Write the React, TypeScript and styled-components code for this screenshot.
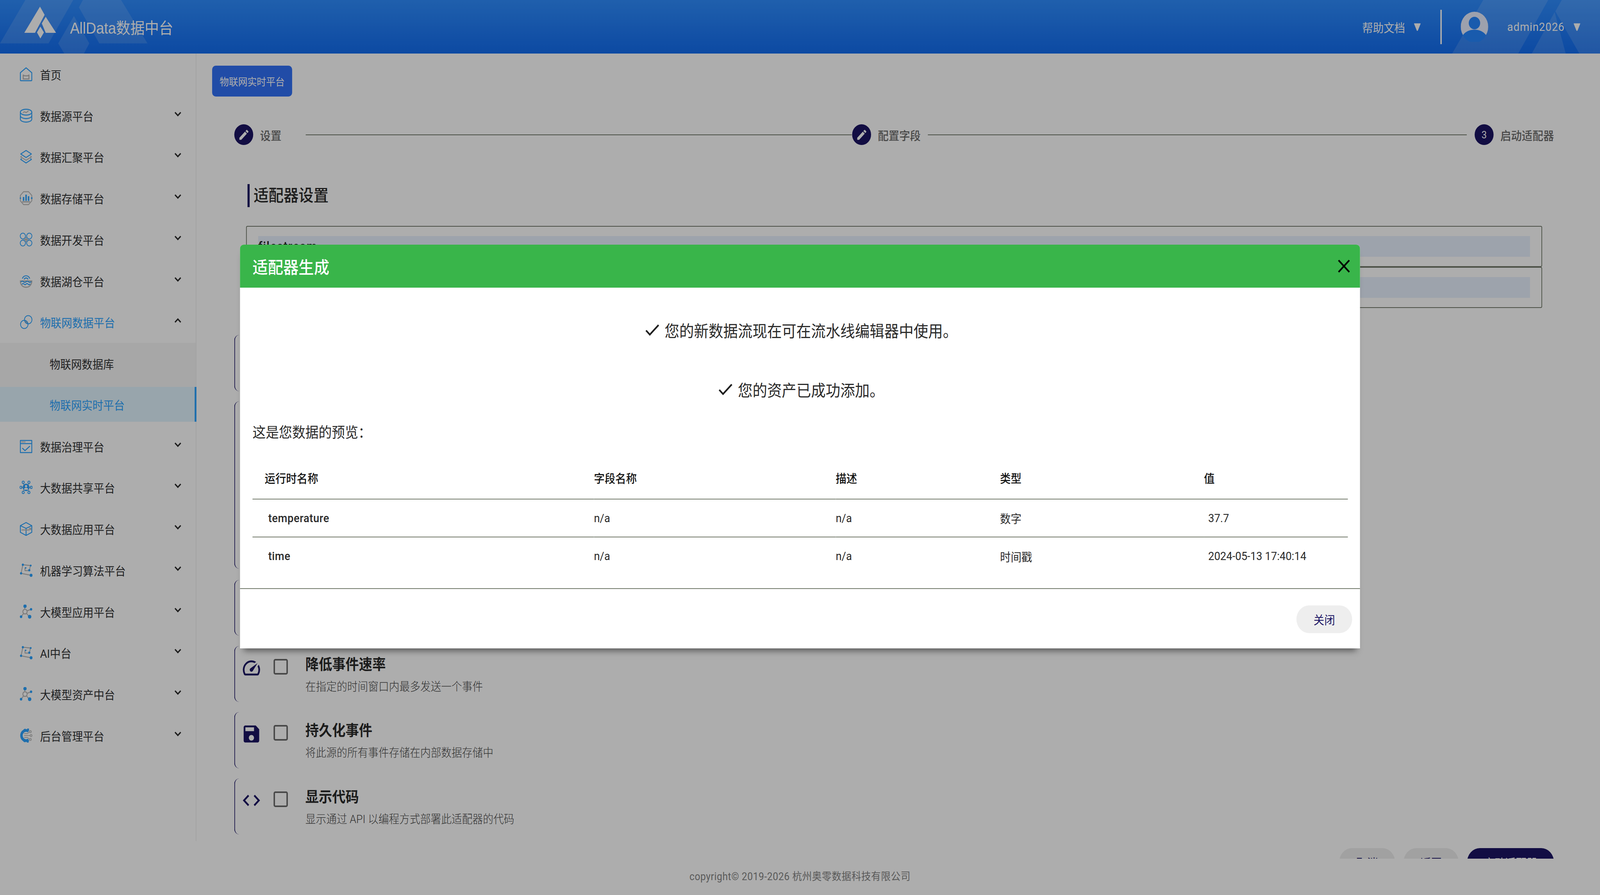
import React, { useState } from "react";
import styled, { createGlobalStyle } from "styled-components";

const NAVY = "#1b1464";
const BLUE = "#2ca3ff";
const GRAY = "#b9b9b9";
const RULE = "#727a6b";
const DESIGN_WIDTH = 4480;

const Global = createGlobalStyle`
  html, body { margin: 0; padding: 0; background: #fff; overflow: hidden; }
  body { font-family: Roboto, "Noto Sans CJK SC", sans-serif; }
  * { box-sizing: border-box; }
`;

const Stage = styled.div`
  width: 100vw;
  height: 100vh;
  overflow: hidden;
`;

const Page = styled.div`
  position: relative;
  width: ${DESIGN_WIDTH}px;
  height: 2290px;
  overflow: hidden;
  display: flex;
  flex-direction: column;
  background: #fff;
  transform-origin: 0 0;
`;

const Header = styled.header`
  position: relative;
  height: 137px;
  flex: none;
  display: flex;
  align-items: center;
  padding-right: 54px;
  background: linear-gradient(180deg, #2f8dff 0%, #136df0 100%);
  color: #fff;
`;

const HeaderDecor = styled.svg`
  position: absolute;
  left: 0;
  top: 0;
  pointer-events: none;
`;

const Logo = styled.svg`
  position: relative;
  align-self: flex-start;
  margin: 17px 0 0 68px;
  flex: none;
`;

const Brand = styled.div`
  position: relative;
  margin-left: 38px;
  padding-top: 1px;
  font: 400 40px "Liberation Sans", "Noto Sans CJK SC", sans-serif;
  white-space: nowrap;
`;

const HeaderRight = styled.div`
  position: relative;
  margin-left: auto;
  display: flex;
  align-items: center;
`;

const HelpText = styled.span`
  font-size: 30px;
  white-space: nowrap;
`;

const UserName = styled.span`
  font-size: 30px;
  letter-spacing: 1.1px;
  margin-left: 53px;
  white-space: nowrap;
`;

const Caret = styled.svg`
  margin-left: 24px;
  flex: none;
`;

const Divider = styled.div`
  width: 4px;
  height: 88px;
  background: #fff;
  margin: 0 53px 0 54px;
`;

const Body = styled.div`
  flex: none;
  height: 2060px;
  display: flex;
  align-items: flex-start;
  overflow: hidden;
`;

const Sidebar = styled.nav`
  width: 550px;
  height: 2015px;
  flex: none;
  border-right: 2px solid #f0f0f0;
  background: #fff;
`;

const MenuRow = styled.div<{ $active?: boolean }>`
  height: 105.75px;
  display: flex;
  align-items: center;
  padding: 0 40px 0 55px;
  font-size: 30px;
  color: ${(p) => (p.$active ? BLUE : "#303133")};
`;

const MenuIcon = styled.svg`
  width: 36px;
  height: 36px;
  flex: none;
  margin-right: 21px;
`;

const Chevron = styled.svg`
  width: 20px;
  height: 12px;
  margin-left: auto;
  margin-top: -8px;
  flex: none;
  fill: none;
  stroke: #2a2a2a;
  stroke-width: 3.4;
`;

const SubMenu = styled.div`
  background: #f6f6f6;
`;

const SubRow = styled.div<{ $active?: boolean }>`
  display: flex;
  align-items: center;
  padding-left: 139px;
  font-size: 30px;
  height: ${(p) => (p.$active ? "89px" : "105.75px")};
  margin: ${(p) => (p.$active ? "7px -2px 9.75px 0" : "0")};
  color: ${(p) => (p.$active ? BLUE : "#303133")};
  background: ${(p) => (p.$active ? "#e1f3fe" : "transparent")};
  border-right: ${(p) => (p.$active ? `5px solid ${BLUE}` : "none")};
`;

const Main = styled.main`
  flex: 1;
  min-width: 0;
  padding: 31px 0 0 44px;
`;

const TagButton = styled.div`
  width: 224px;
  height: 79px;
  border-radius: 10px;
  background: #3170f7;
  color: #fff;
  font-size: 26px;
  display: flex;
  align-items: center;
  justify-content: center;
`;

const Stepper = styled.div`
  width: 3695px;
  height: 53px;
  margin: 71px 0 0 62px;
  display: flex;
  align-items: center;
`;

const StepDot = styled.div`
  width: 53px;
  height: 53px;
  border-radius: 50%;
  background: ${NAVY};
  color: #fff;
  font-size: 26px;
  flex: none;
  display: flex;
  align-items: center;
  justify-content: center;
`;

const StepLabel = styled.span`
  margin-left: 19px;
  font-size: 30px;
  font-weight: 500;
  color: #6b6b6b;
  white-space: nowrap;
`;

const StepLine = styled.div<{ $grow: number; $left: number; $right: number }>`
  flex: ${(p) => p.$grow} 1 0;
  height: 2px;
  background: ${RULE};
  margin: 0 ${(p) => p.$right}px 0 ${(p) => p.$left}px;
`;

const SectionTitle = styled.h2`
  margin: 100px 0 0 99px;
  height: 59px;
  padding-left: 11px;
  border-left: 6px solid ${NAVY};
  font-size: 42px;
  font-weight: 500;
  line-height: 59px;
  color: #2a2a2a;
`;

const FieldBox = styled.div<{ $first?: boolean }>`
  width: 3629px;
  height: 105px;
  margin: ${(p) => (p.$first ? "48px" : "0")} 0 0 95px;
  padding: 24px 32px 0;
  border: 2px solid ${RULE};
  border-radius: 4px;
`;

const FieldValue = styled.div`
  height: 53px;
  background: #e8f0fe;
  font-size: 33px;
  font-weight: 500;
  letter-spacing: 1.6px;
  line-height: 53px;
  color: #222;
`;

const CardList = styled.div`
  margin: 69px 0 0 62px;
  display: flex;
  flex-direction: column;
`;

const Card = styled.section<{ $height: number; $gap: number }>`
  height: ${(p) => p.$height}px;
  margin-bottom: ${(p) => p.$gap}px;
  padding: 22px 0 0 17px;
  border-left: 2px solid ${NAVY};
  border-radius: 14px 0 0 14px;
  display: flex;
  align-items: flex-start;
`;

const CardIcon = styled.svg`
  width: 58px;
  height: 58px;
  margin-top: 5px;
  fill: ${NAVY};
  flex: none;
`;

const CheckBox = styled.div`
  width: 40px;
  height: 40px;
  margin: 11px 49px 0 33px;
  border: 4px solid #6b6b6b;
  border-radius: 5px;
  flex: none;
`;

const CardTitle = styled.div`
  font-size: 37.5px;
  font-weight: 700;
  line-height: 50px;
  color: #2a2a2a;
`;

const CardHint = styled.div`
  margin-top: 12px;
  font-size: 29.25px;
  font-weight: 300;
  line-height: 40px;
  color: #4a4a4a;
`;

const ActionBar = styled.div`
  width: 3695px;
  margin: 9px 0 0 62px;
  display: flex;
  justify-content: flex-end;
  gap: 24px;
`;

const Pill = styled.div<{ $primary?: boolean; $width: number }>`
  width: ${(p) => p.$width}px;
  height: 71px;
  border-radius: 36px;
  background: ${(p) => (p.$primary ? NAVY : "#eeeeee")};
  color: ${(p) => (p.$primary ? "#fff" : NAVY)};
  font-size: 30px;
  display: flex;
  align-items: center;
  justify-content: center;
  flex: none;
`;

const Footer = styled.footer`
  flex: 1;
  padding-bottom: 6px;
  display: flex;
  align-items: center;
  justify-content: center;
  font-size: 27px;
  letter-spacing: 0.6px;
  color: #858585;
`;

const Overlay = styled.div`
  position: absolute;
  inset: 0;
  background: rgba(0, 0, 0, 0.32);
  display: flex;
  align-items: center;
  justify-content: center;
  padding-bottom: 6px;
`;

const Dialog = styled.div`
  width: 3136px;
  background: #fff;
  border-radius: 10px 10px 0 0;
  box-shadow: 0 16px 16px -10px rgba(0, 0, 0, 0.5);
`;

const DialogHead = styled.div`
  height: 110px;
  padding: 0 28px 0 35px;
  border-radius: 10px 10px 0 0;
  background: #39b54a;
  display: flex;
  align-items: center;
  justify-content: space-between;
  color: #fff;
  font-size: 43px;
  font-weight: 500;
`;

const CloseIcon = styled.svg`
  width: 34px;
  height: 34px;
  stroke: #000;
  stroke-width: 4.5;
  fill: none;
`;

const DialogBody = styled.div`
  padding: 78px 34px 34px 35px;
  border-bottom: 2px solid ${RULE};
`;

const Notice = styled.div<{ $gap: number }>`
  height: 60px;
  margin-bottom: ${(p) => p.$gap}px;
  display: flex;
  align-items: center;
  justify-content: center;
  gap: 9px;
  font-size: 41px;
  color: #2a2a2a;
`;

const CheckMark = styled.svg`
  width: 52px;
  height: 52px;
  fill: #1f1f1f;
  flex: none;
`;

const Lead = styled.div`
  height: 60px;
  margin-bottom: 31px;
  font-size: 37px;
  line-height: 60px;
  color: #2a2a2a;
`;

const PreviewTable = styled.table`
  width: 3067px;
  table-layout: fixed;
  border-collapse: collapse;
  font-size: 30px;
`;

const Th = styled.th<{ $width?: number; $pad?: number }>`
  width: ${(p) => (p.$width ? `${p.$width}px` : "auto")};
  height: 108px;
  padding: 0 0 0 ${(p) => p.$pad ?? 0}px;
  border-bottom: 2px solid ${RULE};
  text-align: left;
  font-weight: 500;
  color: #111;
`;

const Td = styled.td<{ $pad?: number; $strong?: boolean }>`
  height: 97px;
  padding: 0 0 0 ${(p) => p.$pad ?? 0}px;
  color: #2a2a2a;
  font-weight: ${(p) => (p.$strong ? 500 : 400)};
  letter-spacing: ${(p) => (p.$strong ? "0.6px" : "0")};
`;

const Tr = styled.tr`
  &:not(:last-child) > td {
    border-bottom: 2px solid ${RULE};
  }
`;

const DialogFoot = styled.div`
  height: 152px;
  padding: 42px 22px 0 0;
  display: flex;
  justify-content: flex-end;
  align-items: flex-start;
`;

const Line = (p: React.SVGProps<SVGPathElement>) => (
  <path fill="none" strokeWidth={2.4} strokeLinecap="round" strokeLinejoin="round" stroke={BLUE} {...p} />
);
const GLine = (p: React.SVGProps<SVGPathElement>) => <Line stroke={GRAY} {...p} />;
const Dot = ({ x, y, r }: { x: number; y: number; r: number }) => <circle cx={x} cy={y} r={r} fill={BLUE} />;
const Ring = ({ x, y, r, c = BLUE }: { x: number; y: number; r: number; c?: string }) => (
  <circle cx={x} cy={y} r={r} fill="none" stroke={c} strokeWidth={2} />
);

const mlIcon = (
  <>
    <GLine d="M9 4 L30 6 L28 16 M9 4 L4 26 L32 31 M15 12 V19 H27" />
    <Dot x={9} y={4} r={3} />
    <Dot x={31} y={6} r={2.5} />
    <Dot x={4} y={26} r={3} />
    <Dot x={32} y={31} r={4} />
    <Dot x={17} y={12} r={2} />
    <Dot x={27} y={18} r={3} />
  </>
);
const modelIcon = (
  <>
    <GLine d="M15 18 L14 6 M15 18 L32 12 M15 18 L4 31 M15 18 L27 31" />
    <Dot x={15} y={4} r={4.6} />
    <Dot x={32} y={12} r={3.2} />
    <Dot x={4} y={31} r={3.4} />
    <Dot x={28} y={31} r={4.8} />
    <circle cx={15} cy={18} r={6} fill="#fff" stroke={GRAY} strokeWidth={2.6} />
  </>
);

const icons: Record<string, React.ReactNode> = {
  home: (
    <>
      <Line d="M2 14 L18 1.5 L34 14 V33 a1.5 1.5 0 0 1 -1.5 1.5 H3.5 A1.5 1.5 0 0 1 2 33 Z" />
      <GLine strokeWidth={3} d="M10 20 L14 22 H22 L26 20 V30 H10 Z" />
    </>
  ),
  db: (
    <>
      <ellipse cx={18} cy={9} rx={16} ry={7.5} fill="none" stroke={BLUE} strokeWidth={2.4} />
      <Line d="M2 9 V27 C2 31 9 34.5 18 34.5 S34 31 34 27 V9" />
      <Line d="M2 18 C2 22 9 25.5 18 25.5 S34 22 34 18" />
      <GLine d="M10 10 q3 -3 6 -1 t4 0 l4 -3" />
    </>
  ),
  layers: (
    <>
      <Line d="M18 2 L33 11 L18 20 L3 11 Z" />
      <GLine d="M5 17 L3 18.5 L18 27 L33 18.5 L31 17" />
      <Line d="M5 23 L3 25 L18 34 L33 25 L31 23" />
    </>
  ),
  storage: (
    <>
      <GLine d="M11 1.5 H25 L34 11 V25 L25 34.5 H11 L2 25 V11 Z" />
      <rect x={9} y={15} width={4} height={10} fill={BLUE} />
      <rect x={16} y={9} width={4} height={16} fill={BLUE} />
      <rect x={23} y={13} width={4} height={12} fill={BLUE} />
      <rect x={7} y={26} width={22} height={3} fill={GRAY} />
      <Dot x={2} y={18} r={2} />
      <Dot x={34} y={18} r={2.4} />
    </>
  ),
  dev: (
    <>
      <Ring x={9} y={9} r={7.4} />
      <Ring x={27} y={9} r={7.4} />
      <Ring x={9} y={27} r={7.4} />
      <Ring x={27} y={27} r={7.4} />
      <GLine strokeWidth={3} d="M18 13 V23 M13 18 H23" />
    </>
  ),
  lake: (
    <>
      <Line d="M8 11 A11 11 0 0 1 28 11" />
      <Line d="M13 13 A6 6 0 0 1 23 13" />
      <path d="M2 18 H34 C34 28 27 34 18 34 S2 28 2 18 Z" fill="#fff" stroke={GRAY} strokeWidth={2.8} />
      <Line d="M4 20 q3.5 -3 7 0 t7 0 t7 0 t7 0" />
      <Line d="M7 26 q2.7 -3 5.5 0 t5.5 0 t5.5 0 t5.5 0" />
    </>
  ),
  iot: (
    <>
      <path d="M14 13 A10 10 0 0 1 24 23 A10 10 0 0 1 14 13 Z" fill={GRAY} />
      <Ring x={13} y={24} r={10.5} />
      <Ring x={24} y={12} r={10.5} />
    </>
  ),
  gov: (
    <>
      <Line d="M2 3 H34 V34 H2 Z M2 11 H34" />
      <GLine strokeWidth={2.8} d="M6 6.8 H7 M10 6.8 H11 M14 6.8 H15" />
      <Line d="M8 23 L15 29 L28 18" />
    </>
  ),
  share: (
    <>
      <GLine d="M10 9 L26 27 M26 9 L10 27 M5 18 H31" />
      <Dot x={18} y={18} r={9.5} />
      <circle cx={18} cy={15} r={3} fill="#fff" />
      <path d="M12 24 a6 5 0 0 1 12 0 Z" fill="#fff" />
      <Ring x={10} y={5} r={3} />
      <Ring x={26} y={5} r={3} />
      <Ring x={3.5} y={18} r={3} />
      <Ring x={32.5} y={18} r={3} />
      <Ring x={10} y={31} r={3} />
      <Ring x={26} y={31} r={3} />
    </>
  ),
  cube: (
    <>
      <Line d="M18 2 L34 10 V27 L18 35 L2 27 V10 Z M2 10 L18 17 L34 10 M18 17 V35" />
      <GLine d="M6 21 H25 Q30 21 31 17 M27 17 L31 16.5 L32 20" />
    </>
  ),
  ml: mlIcon,
  model: modelIcon,
  admin: (
    <>
      <path d="M25 7 A13 13 0 1 0 25 29" fill="none" stroke={BLUE} strokeWidth={7} />
      <path d="M26 2.5 A16.5 16.5 0 1 0 26 33.5" fill="none" stroke={BLUE} strokeWidth={3.5} strokeDasharray="5 4.5" />
      <GLine strokeWidth={1.8} d="M13 13 H22 L27 9 M13 18 H29 M13 23 H22 L27 27" />
      <Ring x={30} y={8} r={2.6} c={GRAY} />
      <Ring x={32} y={18} r={2.6} c={GRAY} />
      <Ring x={30} y={28} r={2.6} c={GRAY} />
    </>
  ),
};

const menu: { label: string; icon: string }[] = [
  { label: "数据源平台", icon: "db" },
  { label: "数据汇聚平台", icon: "layers" },
  { label: "数据存储平台", icon: "storage" },
  { label: "数据开发平台", icon: "dev" },
  { label: "数据湖仓平台", icon: "lake" },
];
const menuAfter: { label: string; icon: string }[] = [
  { label: "数据治理平台", icon: "gov" },
  { label: "大数据共享平台", icon: "share" },
  { label: "大数据应用平台", icon: "cube" },
  { label: "机器学习算法平台", icon: "ml" },
  { label: "大模型应用平台", icon: "model" },
  { label: "AI中台", icon: "ml" },
  { label: "大模型资产中台", icon: "model" },
  { label: "后台管理平台", icon: "admin" },
];

const NavIcon = ({ name }: { name: string }) => <MenuIcon viewBox="0 0 36 36">{icons[name]}</MenuIcon>;
const Chev = ({ up }: { up?: boolean }) => (
  <Chevron viewBox="0 0 20 12">
    <path d={up ? "M2 10.5 L10 2.5 L18 10.5" : "M2 1.5 L10 9.5 L18 1.5"} />
  </Chevron>
);

const Pencil = () => (
  <svg width="34" height="34" viewBox="0 0 24 24" fill="#fff">
    <path d="M3 17.25V21h3.75L17.81 9.94l-3.75-3.75L3 17.25zM20.71 7.04c.39-.39.39-1.02 0-1.41l-2.34-2.34c-.39-.39-1.02-.39-1.41 0l-1.83 1.83 3.75 3.75 1.83-1.83z" />
  </svg>
);

const CaretDown = () => (
  <Caret width="21" height="20" viewBox="0 0 21 20">
    <path d="M2 1.5 H19 L11.5 18.5 Q10.5 20 9.5 18.5 Z" fill="#fff" stroke="#fff" strokeLinejoin="round" strokeWidth="1.5" />
  </Caret>
);

const Check = () => (
  <CheckMark viewBox="0 0 24 24">
    <path d="M9 16.17L4.83 12l-1.42 1.41L9 19 21 7l-1.41-1.41z" />
  </CheckMark>
);

const DataRow = (p: { name: string; type: string; value: string }) => (
  <Tr>
    <Td $pad={44} $strong>{p.name}</Td>
    <Td>n/a</Td>
    <Td>n/a</Td>
    <Td>{p.type}</Td>
    <Td $pad={12}>{p.value}</Td>
  </Tr>
);

export default function App() {
  // The design is 4480 wide; fit it to whatever width the browser really gives.
  const [fit] = useState(() => Math.min(1, window.innerWidth / DESIGN_WIDTH));
  return (
    <Stage>
      <Global />
      <Page style={{ transform: `scaleX(${fit})` }}>
        <Header>
          <HeaderDecor width="4480" height="137" viewBox="0 0 4480 137">
            <g fill="#fff" fillOpacity="0.13">
              <polygon points="0,111 71,0 205,0 136,111" />
              <polygon points="221,19 232,0 339,0 413,111 278,111" />
              <polygon points="163,111 207,41 250,111 235,137 180,137" />
              <polygon points="4153,0 4335,0 4251,137 4066,137" />
              <polygon points="4373,0 4480,0 4480,137 4422,137 4355,29" />
              <polygon points="4353,31 4384,137 4289,137" />
            </g>
          </HeaderDecor>
          <Logo width="90" height="82" viewBox="0 0 90 82">
            <g fill="#fff">
              <polygon points="44,0 57,21 30,67 0,67" />
              <polygon points="60,26 89,67 60,67 49,43" />
              <polygon points="45,51 55,66 45,81.5 35.5,66" />
            </g>
          </Logo>
          <Brand>AllData数据中台</Brand>
          <HeaderRight>
            <HelpText>帮助文档</HelpText>
            <CaretDown />
            <Divider />
            <svg width="77" height="77" viewBox="0 0 77 77">
              <circle cx="38.5" cy="38.5" r="38.5" fill="#e8eeff" />
              <ellipse cx="38.5" cy="29" rx="16" ry="16" fill="#2687ff" />
              <path d="M6 60 C14 50 26 46 38.5 46 C51 46 63 50 71 60 A37 37 0 0 1 6 60 Z" fill="#2687ff" />
            </svg>
            <UserName>admin2026</UserName>
            <CaretDown />
          </HeaderRight>
        </Header>

        <Body>
          <Sidebar>
            <MenuRow>
              <NavIcon name="home" />
              首页
            </MenuRow>
            {menu.map((m) => (
              <MenuRow key={m.label}>
                <NavIcon name={m.icon} />
                {m.label}
                <Chev />
              </MenuRow>
            ))}
            <MenuRow $active>
              <NavIcon name="iot" />
              物联网数据平台
              <Chev up />
            </MenuRow>
            <SubMenu>
              <SubRow>物联网数据库</SubRow>
              <SubRow $active>物联网实时平台</SubRow>
            </SubMenu>
            {menuAfter.map((m) => (
              <MenuRow key={m.label}>
                <NavIcon name={m.icon} />
                {m.label}
                <Chev />
              </MenuRow>
            ))}
          </Sidebar>

          <Main>
            <TagButton>物联网实时平台</TagButton>
            <Stepper>
              <StepDot>
                <Pencil />
              </StepDot>
              <StepLabel>设置</StepLabel>
              <StepLine $grow={1529} $left={68} $right={1} />
              <StepDot>
                <Pencil />
              </StepDot>
              <StepLabel>配置字段</StepLabel>
              <StepLine $grow={1509} $left={20} $right={22} />
              <StepDot>3</StepDot>
              <StepLabel>启动适配器</StepLabel>
            </Stepper>
            <SectionTitle>适配器设置</SectionTitle>
            <FieldBox $first>
              <FieldValue>filestream</FieldValue>
            </FieldBox>
            <FieldBox>
              <FieldValue />
            </FieldBox>
            <CardList>
              <Card $height={144} $gap={26} />
              <Card $height={428} $gap={29} />
              <Card $height={142} $gap={27} />
              <Card $height={143} $gap={26}>
                <CardIcon viewBox="0 0 24 24">
                  <path d="M20.38 8.57l-1.23 1.85a8 8 0 0 1-.22 7.58H5.07A8 8 0 0 1 15.58 6.85l1.85-1.23A10 10 0 0 0 3.35 19a2 2 0 0 0 1.72 1h13.85a2 2 0 0 0 1.74-1 10 10 0 0 0-.27-10.44zM10.59 15.41a2 2 0 0 0 2.83 0l5.66-8.49-8.49 5.66a2 2 0 0 0 0 2.83z" />
                </CardIcon>
                <CheckBox />
                <div>
                  <CardTitle>降低事件速率</CardTitle>
                  <CardHint>在指定的时间窗口内最多发送一个事件</CardHint>
                </div>
              </Card>
              <Card $height={144} $gap={26}>
                <CardIcon viewBox="0 0 24 24">
                  <path d="M17 3H5c-1.11 0-2 .9-2 2v14c0 1.1.89 2 2 2h14c1.1 0 2-.9 2-2V7l-4-4zm-5 16c-1.66 0-3-1.34-3-3s1.34-3 3-3 3 1.34 3 3-1.34 3-3 3zm3-10H5V5h10v4z" />
                </CardIcon>
                <CheckBox />
                <div>
                  <CardTitle>持久化事件</CardTitle>
                  <CardHint>将此源的所有事件存储在内部数据存储中</CardHint>
                </div>
              </Card>
              <Card $height={143} $gap={26}>
                <CardIcon viewBox="0 0 24 24">
                  <path d="M9.4 16.6L4.8 12l4.6-4.6L8 6l-6 6 6 6 1.4-1.4zm5.2 0l4.6-4.6-4.6-4.6L16 6l6 6-6 6-1.4-1.4z" />
                </CardIcon>
                <CheckBox />
                <div>
                  <CardTitle>显示代码</CardTitle>
                  <CardHint>显示通过 API 以编程方式部署此适配器的代码</CardHint>
                </div>
              </Card>
            </CardList>
            <ActionBar>
              <Pill $width={156}>取消</Pill>
              <Pill $width={154}>返回</Pill>
              <Pill $primary $width={243}>启动适配器</Pill>
            </ActionBar>
          </Main>
        </Body>

        <Footer>copyright© 2019-2026 杭州奥零数据科技有限公司</Footer>

        <Overlay>
          <Dialog>
            <DialogHead>
              适配器生成
              <CloseIcon viewBox="0 0 34 34">
                <path d="M2 2 L32 32 M32 2 L2 32" />
              </CloseIcon>
            </DialogHead>
            <DialogBody>
              <Notice $gap={92}>
                <Check />
                您的新数据流现在可在流水线编辑器中使用。
              </Notice>
              <Notice $gap={52}>
                <Check />
                您的资产已成功添加。
              </Notice>
              <Lead>这是您数据的预览：</Lead>
              <PreviewTable>
                <thead>
                  <tr>
                    <Th $width={956} $pad={34}>运行时名称</Th>
                    <Th $width={677}>字段名称</Th>
                    <Th $width={460}>描述</Th>
                    <Th $width={571}>类型</Th>
                    <Th>值</Th>
                  </tr>
                </thead>
                <tbody>
                  <DataRow name="temperature" type="数字" value="37.7" />
                  <DataRow name="time" type="时间戳" value="2024-05-13 17:40:14" />
                </tbody>
              </PreviewTable>
            </DialogBody>
            <DialogFoot>
              <Pill $width={156}>关闭</Pill>
            </DialogFoot>
          </Dialog>
        </Overlay>
      </Page>
    </Stage>
  );
}
